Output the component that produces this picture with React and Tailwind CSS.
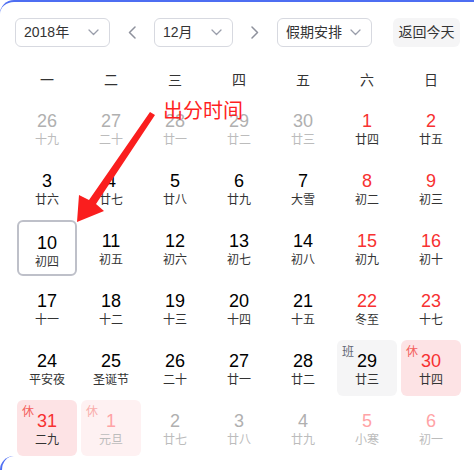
import React from "react";

const Chevron = () => (
  <svg width="11" height="7" viewBox="0 0 11 7" fill="none">
    <polyline points="1,1 5.5,5.5 10,1" stroke="#9a9eab" strokeWidth="1.3" strokeLinejoin="round" strokeLinecap="round" />
  </svg>
);

const Select = ({ label, w }) => (
  <div className={`${w} h-[29px] flex items-center justify-between border border-[#d7d9e0] rounded-[6px] pl-[8px] pr-[10px] text-[14px] text-[#333]`}>
    <span>{label}</span>
    <Chevron />
  </div>
);

const Arrow = ({ dir }) => (
  <div className="w-[44px] h-[29px] flex items-center justify-center">
    <svg width="8" height="13" viewBox="0 0 8 13" fill="none">
      {dir === "left" ? (
        <polyline points="7,1 1.5,6.5 7,12" stroke="#8e919c" strokeWidth="1.5" strokeLinejoin="round" strokeLinecap="round" />
      ) : (
        <polyline points="1,1 6.5,6.5 1,12" stroke="#8e919c" strokeWidth="1.5" strokeLinejoin="round" strokeLinecap="round" />
      )}
    </svg>
  </div>
);

// t: n normal, r red weekend, g gray other month, gr faded red other month
const rows = [
  [["26", "十九", "g"], ["27", "二十", "g"], ["28", "廿一", "g"], ["29", "廿二", "g"], ["30", "廿三", "g"], ["1", "廿四", "r"], ["2", "廿五", "r"]],
  [["3", "廿六", "n"], ["4", "廿七", "n"], ["5", "廿八", "n"], ["6", "廿九", "n"], ["7", "大雪", "n"], ["8", "初二", "r"], ["9", "初三", "r"]],
  [["10", "初四", "n", "sel"], ["11", "初五", "n"], ["12", "初六", "n"], ["13", "初七", "n"], ["14", "初八", "n"], ["15", "初九", "r"], ["16", "初十", "r"]],
  [["17", "十一", "n"], ["18", "十二", "n"], ["19", "十三", "n"], ["20", "十四", "n"], ["21", "十五", "n"], ["22", "冬至", "r"], ["23", "十七", "r"]],
  [["24", "平安夜", "n"], ["25", "圣诞节", "n"], ["26", "二十", "n"], ["27", "廿一", "n"], ["28", "廿二", "n"], ["29", "廿三", "n", "ban"], ["30", "廿四", "r", "xiu"]],
  [["31", "二九", "r", "xiu"], ["1", "元旦", "gr", "xiuf"], ["2", "廿七", "g"], ["3", "廿八", "g"], ["4", "廿九", "g"], ["5", "小寒", "gr"], ["6", "初一", "gr"]],
];

const numColor = { n: "text-[#000]", r: "text-[#f73131]", g: "text-[#b0b0b0]", gr: "text-[#ffa3a6]" };
const lunarColor = { n: "text-[#333]", r: "text-[#333]", g: "text-[#bcbcbc]", gr: "text-[#bcbcbc]" };

const Cell = ({ d }) => {
  const [num, lunar, t, flag] = d;
  let box = "relative h-[56px] rounded-[6px] flex flex-col items-center pt-[11px]";
  if (flag === "sel") box += " border-2 border-[#bec0c9] pt-[9px]";
  if (flag === "ban") box += " bg-[#f5f5f6]";
  if (flag === "xiu") box += " bg-[#fde3e5]";
  if (flag === "xiuf") box += " bg-[#fef1f2]";
  return (
    <div className="p-[2px]">
      <div className={box}>
        {flag === "ban" && <span className="absolute left-[5px] top-[5px] text-[12px] leading-[14px] text-[#626675]">班</span>}
        {flag === "xiu" && <span className="absolute left-[5px] top-[5px] text-[12px] leading-[14px] text-[#f4605c]">休</span>}
        {flag === "xiuf" && <span className="absolute left-[5px] top-[5px] text-[12px] leading-[14px] text-[#f9adab]">休</span>}
        <span className={`text-[18px] leading-[20px] ${numColor[t]}`}>{num}</span>
        <span className={`text-[12px] leading-[16px] mt-[1px] ${lunarColor[t]}`}>{lunar}</span>
      </div>
    </div>
  );
};

export default function App() {
  return (
    <div className="relative w-[474px] h-[470px] overflow-hidden bg-white font-['Liberation_Sans','Noto_Sans_CJK_SC',sans-serif]">
      <div className="h-full border-t-2 border-[#4e6ef2] rounded-tl-[14px] pt-[16px] pl-[15px]">
        <div className="flex items-center">
          <Select label="2018年" w="w-[95px]" />
          <Arrow dir="left" />
          <Select label="12月" w="w-[79px]" />
          <Arrow dir="right" />
          <Select label="假期安排" w="w-[95px]" />
          <div className="ml-[21px] w-[67px] h-[29px] flex items-center justify-center rounded-[6px] bg-[#f5f5f6] text-[14px] text-[#333]">
            返回今天
          </div>
        </div>
        <div className="mt-[15px] w-[448px] grid grid-cols-7 h-[36px] items-center text-[14px] text-[#333]">
          {["一", "二", "三", "四", "五", "六", "日"].map((w) => (
            <div key={w} className="text-center">{w}</div>
          ))}
        </div>
        <div className="w-[448px] grid grid-cols-7">
          {rows.flat().map((d, i) => (
            <Cell key={i} d={d} />
          ))}
        </div>
      </div>
      <div className="absolute left-0 top-[456px] w-[20px] h-[20px] border-l-2 border-[#4e6ef2] rounded-tl-[14px]" />
      <svg className="absolute left-0 top-0 pointer-events-none" width="474" height="470">
        <polygon points="150,112 155,115 96,204 104,211 77,222 79,195 89,200" fill="#fa1e1e" />
      </svg>
      <div className="absolute left-[163px] top-[98px] text-[20px] leading-[24px] text-[#ff1f1f] font-['Noto_Sans_CJK_SC',sans-serif]">
        出分时间
      </div>
    </div>
  );
}
